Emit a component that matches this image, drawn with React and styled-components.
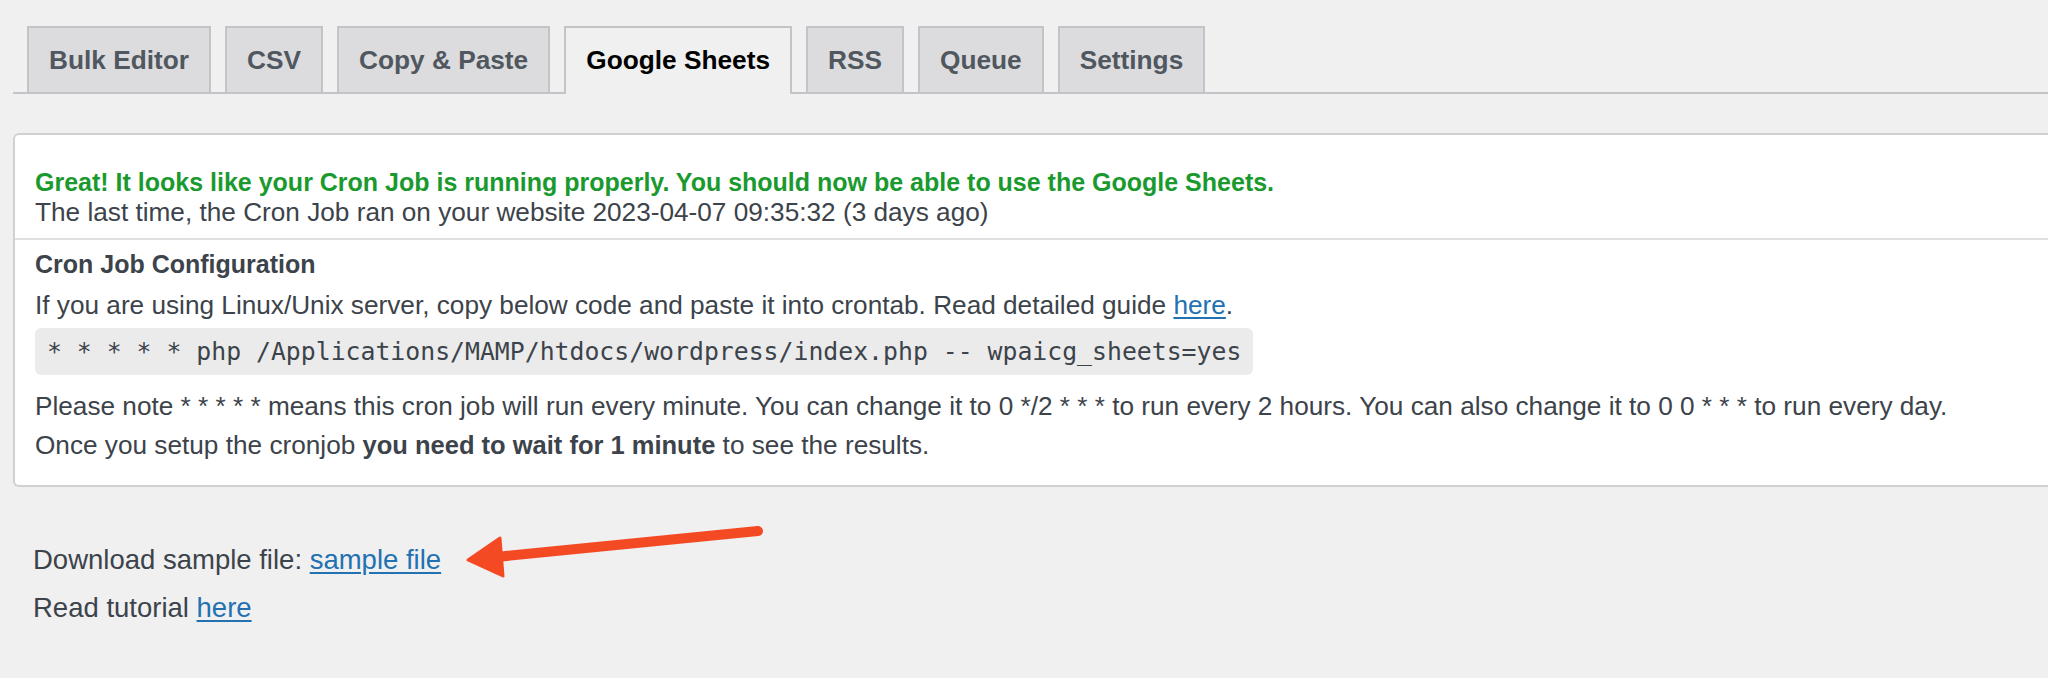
import styled, { createGlobalStyle } from "styled-components";

const GlobalStyle = createGlobalStyle`
  html, body {
    margin: 0;
    padding: 0;
    background: #f0f0f1;
  }
  body {
    font-family: "Liberation Sans", Arial, sans-serif;
    color: #3c434a;
    overflow: hidden;
  }
`;

const Page = styled.div`
  position: relative;
  width: 2048px;
  height: 678px;
  padding: 26px 0 0 13px;
  box-sizing: border-box;
`;

const TabNav = styled.nav`
  display: flex;
  gap: 14px;
  padding-left: 14px;
  border-bottom: 2px solid #c3c4c7;
  height: 66px;
  box-sizing: content-box;
`;

const Tab = styled.a`
  display: flex;
  align-items: center;
  height: 66px;
  box-sizing: border-box;
  padding: 0 20px;
  margin-bottom: -2px;
  border: 2px solid #c3c4c7;
  border-bottom: none;
  background: ${(p) => (p.$active ? "#f0f0f1" : "#dcdcde")};
  color: ${(p) => (p.$active ? "#000" : "#50575e")};
  font-size: 26.25px;
  font-weight: 700;
  text-decoration: none;
  white-space: nowrap;
  ${(p) => p.$active && "height: 68px; padding-bottom: 2px;"}
`;

const Panel = styled.section`
  margin-top: 39px;
  background: #fff;
  border: 2px solid #d0d1d3;
  border-right: none;
  border-radius: 6px 0 0 6px;
  padding: 32px 0 20px 0;
`;

const Block = styled.div`
  padding: 0 20px;
`;

const Success = styled.p`
  margin: 0;
  font-size: 25px;
  line-height: 30px;
  font-weight: 700;
  color: #1a9a2e;
`;

const Line = styled.p`
  margin: ${(p) => p.$margin || "0"};
  font-size: ${(p) => (p.$bold ? "25px" : "26.2px")};
  line-height: ${(p) => p.$lh || "39px"};
  font-weight: ${(p) => (p.$bold ? 700 : 400)};
  white-space: nowrap;

  strong {
    font-weight: 700;
    font-size: 25.5px;
  }
`;

const Divider = styled.hr`
  margin: 11px 0 5px;
  border: none;
  border-top: 2px solid #e0e0e2;
`;

const Code = styled.code`
  display: inline-block;
  margin: 3px 0 12px;
  padding: 0 12px;
  height: 47px;
  line-height: 47px;
  background: #ebebec;
  border-radius: 6px;
  font-family: "DejaVu Sans Mono", "Liberation Mono", monospace;
  font-size: 24.8px;
  color: #3c434a;
  white-space: nowrap;
`;

const Link = styled.a`
  color: #2271b1;
  text-decoration: underline;
  text-underline-offset: 3px;
`;

const Footer = styled.div`
  padding: 53px 0 0 20px;

  p {
    font-size: 27.5px;
  }
`;

const Arrow = styled.svg`
  position: absolute;
  left: 460px;
  top: 520px;
  width: 310px;
  height: 70px;
`;

export default function App() {
  const tabs = ["Bulk Editor", "CSV", "Copy & Paste", "Google Sheets", "RSS", "Queue", "Settings"];
  return (
    <>
      <GlobalStyle />
      <Page>
        <TabNav>
          {tabs.map((t) => (
            <Tab key={t} href="#" $active={t === "Google Sheets"}>
              {t}
            </Tab>
          ))}
        </TabNav>

        <Panel>
          <Block>
            <Success>
              Great! It looks like your Cron Job is running properly. You should now be able to use the Google Sheets.
            </Success>
            <Line $lh="30px">
              The last time, the Cron Job ran on your website 2023-04-07 09:35:32 (3 days ago)
            </Line>
          </Block>
          <Divider />
          <Block>
            <Line $bold>Cron Job Configuration</Line>
            <Line $margin="2px 0 0">
              If you are using Linux/Unix server, copy below code and paste it into crontab. Read detailed guide{" "}
              <Link href="#">here</Link>.
            </Line>
            <Code>* * * * * php /Applications/MAMP/htdocs/wordpress/index.php -- wpaicg_sheets=yes</Code>
            <Line>
              Please note * * * * * means this cron job will run every minute. You can change it to 0 */2 * * * to run
              every 2 hours. You can also change it to 0 0 * * * to run every day.
            </Line>
            <Line>
              Once you setup the cronjob <strong>you need to wait for 1 minute</strong> to see the results.
            </Line>
          </Block>
        </Panel>

        <Footer>
          <Line $lh="39px">
            Download sample file: <Link href="#">sample file</Link>
          </Line>
          <Line $lh="39px" $margin="9px 0 0">
            Read tutorial <Link href="#">here</Link>
          </Line>
        </Footer>

        <Arrow viewBox="0 0 310 70">
          <line x1="36" y1="37" x2="298" y2="11" stroke="#f44a24" strokeWidth="10" strokeLinecap="round" />
          <polygon points="8,40 40,18 43,56" fill="#f44a24" stroke="#f44a24" strokeWidth="3" strokeLinejoin="round" />
        </Arrow>
      </Page>
    </>
  );
}
